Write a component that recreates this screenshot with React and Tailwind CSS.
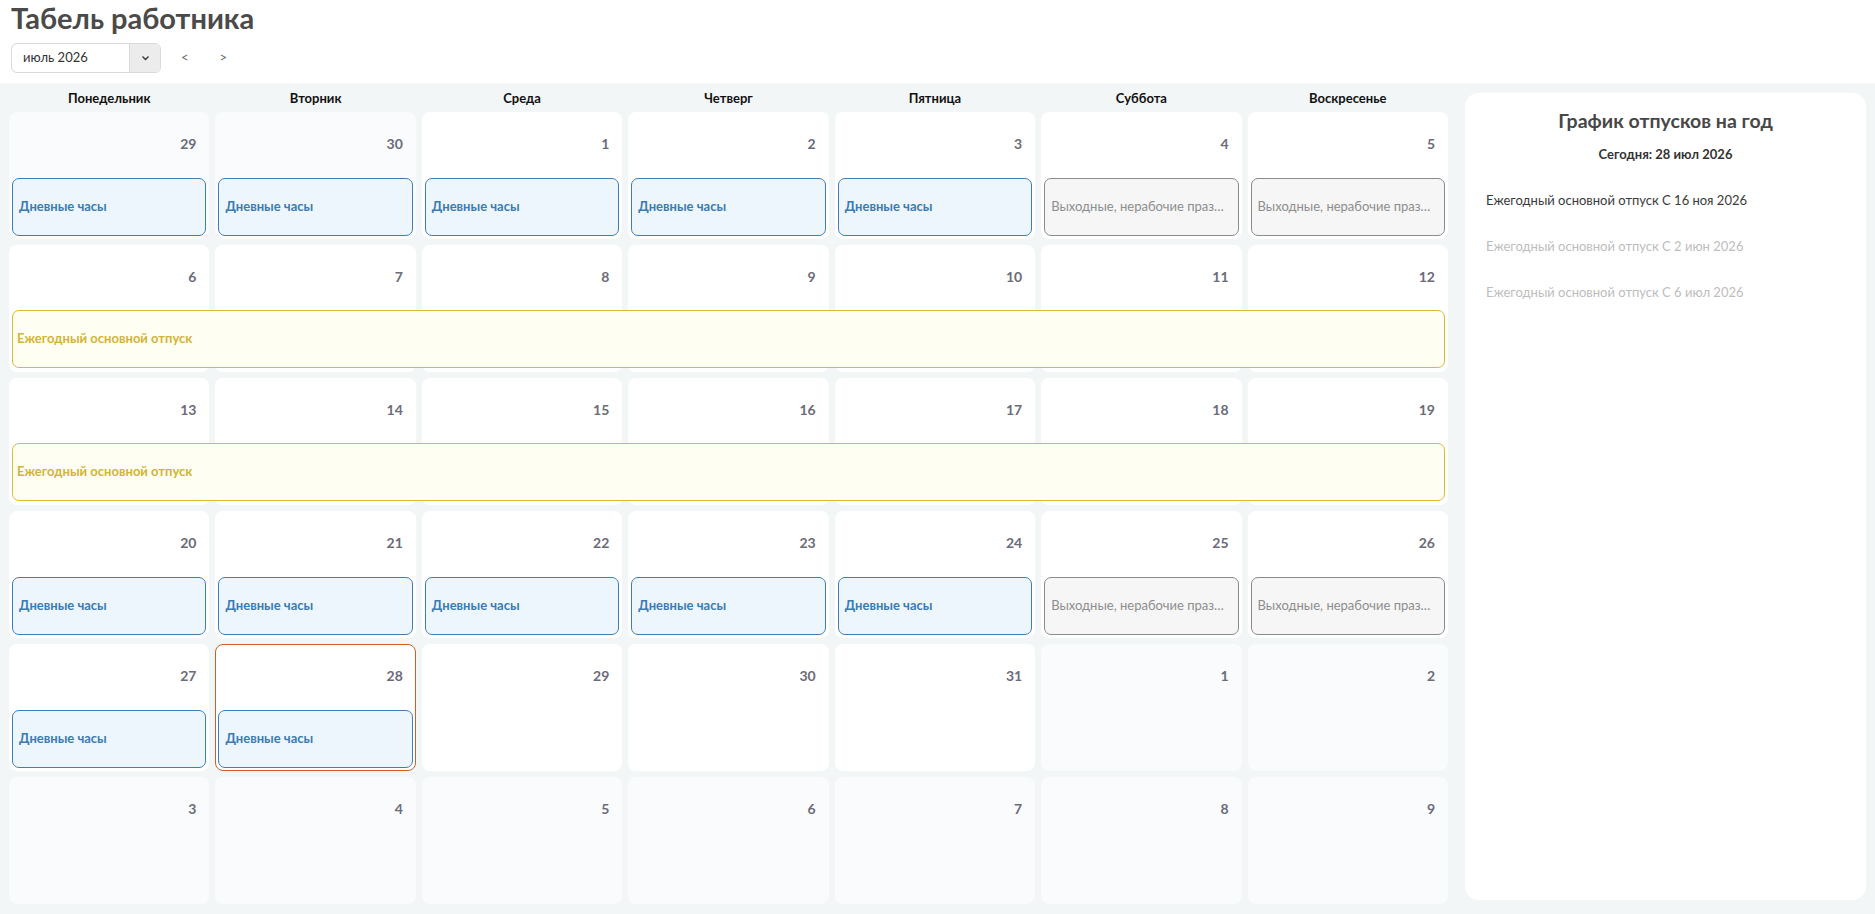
import React from 'react';

const dayNames = ['Понедельник', 'Вторник', 'Среда', 'Четверг', 'Пятница', 'Суббота', 'Воскресенье'];
const colStart = ['col-start-1', 'col-start-2', 'col-start-3', 'col-start-4', 'col-start-5', 'col-start-6', 'col-start-7'];

// each week: list of [day, inMonth, kind, today]  kind: 'work' | 'off' | undefined
const weeks = [
  { days: [[29, false, 'work'], [30, false, 'work'], [1, true, 'work'], [2, true, 'work'], [3, true, 'work'], [4, true, 'off'], [5, true, 'off']] },
  { days: [[6, true], [7, true], [8, true], [9, true], [10, true], [11, true], [12, true]], vacation: true },
  { days: [[13, true], [14, true], [15, true], [16, true], [17, true], [18, true], [19, true]], vacation: true },
  { days: [[20, true, 'work'], [21, true, 'work'], [22, true, 'work'], [23, true, 'work'], [24, true, 'work'], [25, true, 'off'], [26, true, 'off']] },
  { days: [[27, true, 'work'], [28, true, 'work', true], [29, true], [30, true], [31, true], [1, false], [2, false]] },
  { days: [[3, false], [4, false], [5, false], [6, false], [7, false], [8, false], [9, false]] },
];

const vacations = [
  { text: 'Ежегодный основной отпуск С 16 ноя 2026', active: true },
  { text: 'Ежегодный основной отпуск С 2 июн 2026', active: false },
  { text: 'Ежегодный основной отпуск С 6 июл 2026', active: false },
];

const DayCell = ({ day, inMonth, kind, today, col }) => {
  return (
    <div
      className={`row-start-1 ${colStart[col]} min-w-0 flex flex-col rounded-[8px] ${inMonth ? 'bg-white' : 'bg-[#f9fbfd]'} ${
        today ? 'border border-[#cf5f26]' : ''
      }`}
    >
      <div className={`flex justify-end h-[20px] text-[14px] leading-[20px] font-bold text-[#6c6b79] ${today ? 'mt-[21px] pr-[12px]' : 'mt-[22px] pr-[13px]'}`}>
        {day}
      </div>
      {kind === 'work' && (
        <div className={`mt-[24px] h-[58px] rounded-[7px] border border-[#3d7fb8] bg-[#eef6fd] flex items-center px-[6px] ${today ? 'mx-[2px]' : 'mx-[3px]'}`}>
          <span className="text-[13px] font-bold text-[#3a7bb3]">Дневные часы</span>
        </div>
      )}
      {kind === 'off' && (
        <div className="mt-[24px] mx-[3px] h-[58px] rounded-[7px] border border-[#8b8b8b] bg-[#f6f6f6] flex items-center px-[6px] min-w-0">
          <span className="text-[13px] text-[#8d8d8d] truncate">Выходные, нерабочие праздничные дни</span>
        </div>
      )}
    </div>
  );
};

export default function App() {
  return (
    <div className="w-[1875px] min-h-[914px] bg-white font-['Lato','Noto_Sans',sans-serif]">
      <div className="pl-[11px]">
        <h1 className="text-[29px] leading-[36px] font-bold text-[#4a4a4a]">Табель работника</h1>
        <div className="mt-[7px] flex items-center h-[30px]">
          <div className="flex w-[150px] h-[30px] rounded-[6px] border border-[#d9d9d9] overflow-hidden">
            <div className="flex-1 flex items-center pl-[11px] text-[13px] text-[#333]">июль 2026</div>
            <div className="w-[31px] flex items-center justify-center bg-[#ececec] border-l border-[#d9d9d9]">
              <svg width="9" height="6" viewBox="0 0 9 6" fill="none">
                <path d="M1.5 1.5 L4.5 4.5 L7.5 1.5" stroke="#333" strokeWidth="1.3" />
              </svg>
            </div>
          </div>
          <span className="ml-[20px] text-[13px] text-[#666]">&lt;</span>
          <span className="ml-[31px] text-[13px] text-[#666]">&gt;</span>
        </div>
      </div>

      <div className="mt-[10px] bg-[#f3f6f7] flex px-[9px] pb-[10px]">
        <div className="flex-1 min-w-0">
          <div className="grid grid-cols-7 gap-x-[6px] pt-[4px] h-[29px]">
            {dayNames.map((d) => (
              <div key={d} className="flex items-center justify-center h-[24px] text-[13px] font-bold text-[#111]">
                {d}
              </div>
            ))}
          </div>
          <div className="flex flex-col gap-[6px]">
            {weeks.map((w, i) => (
              <div key={i} className="grid grid-cols-7 grid-rows-1 gap-x-[6px] h-[127px]">
                {w.days.map(([day, inMonth, kind, today], j) => (
                  <DayCell key={j} col={j} day={day} inMonth={inMonth} kind={kind} today={today} />
                ))}
                {w.vacation && (
                  <div className="row-start-1 col-start-1 col-span-7 self-end mb-[4px] mx-[3px] h-[58px] rounded-[7px] border border-[#d5bd34] bg-[#fffef3] flex items-center px-[4px]">
                    <span className="text-[13px] font-bold text-[#d3b435]">Ежегодный основной отпуск</span>
                  </div>
                )}
              </div>
            ))}
          </div>
        </div>

        <div className="ml-[17px] mt-[10px] w-[401px] h-[807px] rounded-[14px] bg-white px-[21px]">
          <div className="pt-[16px] text-center text-[19.5px] leading-[24px] font-bold text-[#474747]">График отпусков на год</div>
          <div className="mt-[12px] text-center text-[13px] leading-[18px] font-bold text-[#333]">Сегодня: 28 июл 2026</div>
          <div className="mt-[28px] flex flex-col gap-[28px]">
            {vacations.map((v, i) => (
              <div key={i} className={`text-[13px] leading-[18px] ${v.active ? 'text-[#3a3a3a]' : 'text-[#bdbdbd]'}`}>
                {v.text}
              </div>
            ))}
          </div>
        </div>
      </div>
    </div>
  );
}
